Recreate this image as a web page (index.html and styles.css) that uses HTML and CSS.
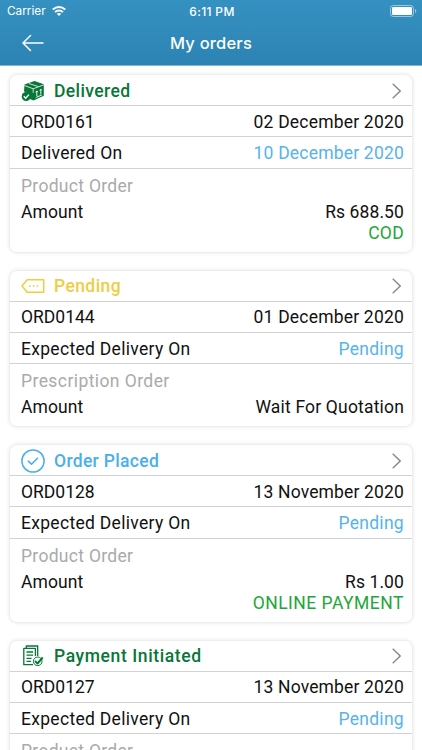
FILE: index.html
```
<!DOCTYPE html>
<html lang="en">
<head>
<meta charset="utf-8">
<meta name="viewport" content="width=device-width, initial-scale=1">
<title>My orders</title>
<link rel="stylesheet" href="styles.css">
</head>
<body>
<header class="top">
  <div class="status">
    <div class="carrier"><span>Carrier</span>
      <svg class="wifi" viewBox="0 0 14 10" width="14" height="10" fill="none" stroke="#fff" stroke-width="1.9"><path d="M.7 3.6Q7-1.6 13.3 3.6M3 6.1Q7 2.8 11 6.1"/><path d="M4.8 7.7Q7 6.2 9.2 7.7L7 10Z" fill="#fff" stroke="none"/></svg>
    </div>
    <div class="time">6:11 PM</div>
    <svg class="battery" viewBox="0 0 27 12" width="27" height="12"><rect x=".5" y=".5" width="23" height="11" rx="2.8" fill="none" stroke="#fff" stroke-opacity=".5"/><rect x="2" y="2" width="20" height="8" rx="1.2" fill="#fff"/><path d="M25 4v4q1.3-.6 1.3-2T25 4" fill="#fff" fill-opacity=".5"/></svg>
  </div>
  <div class="nav">
    <svg class="back" viewBox="0 0 22 18" width="22" height="18" fill="none" stroke="#fff" stroke-width="1.5" stroke-linecap="round" stroke-linejoin="round"><path d="M21 9H1M8.500 1.500 1 9l7.500 7.500"/></svg>
    <h1>My orders</h1>
  </div>
</header>
<main class="orders">
  <article class="card">
    <div class="row head green">
      <svg class="icon" viewBox="0 0 24 24" width="24" height="24"><path fill="currentColor" d="M3.500 5.500 13.500 2 22.800 5.200V16.800L12.500 21.500 9 20Q10 14 3 12.500Z"/><path fill="none" stroke="#fff" stroke-width=".8" d="m3.500 6.500 8.700 3.300L22.800 5.800M12.200 9.800v4M8 4.500l9 3"/><path fill="none" stroke="#fff" stroke-width=".9" d="M15.800 17v-4.800m-1 1.200 1-1.400 1 .7M19.800 15.300v-4.800m-1 1.200 1-1.400 1 .7M14.800 18.500l6-2.500"/><circle cx="5.200" cy="17.500" r="4.500" fill="currentColor"/><path fill="none" stroke="#fff" stroke-width="1.400" d="m2.800 17.300 1.900 1.900 3.200-3.600"/></svg>
      <h2 class="w-delivered">Delivered</h2>
      <svg class="chev" viewBox="0 0 9 16" width="9" height="16"><path d="m.7.7 7.500 7.300-7.500 7.300"/></svg>
    </div>
    <div class="row"><span class="id">ORD0161</span><span class="date">02 December 2020</span></div>
    <div class="row deliver"><span>Delivered On</span><span class="date blue">10 December 2020</span></div>
    <div class="details">
      <p class="kind">Product Order</p>
      <div class="amount"><span class="label">Amount</span><span class="price">Rs 688.50</span></div>
      <p class="method">COD</p>
    </div>
  </article>
  <article class="card short">
    <div class="row head yellow">
      <svg class="icon" viewBox="0 0 24 24" width="24" height="24" fill="none" stroke="currentColor" stroke-width="1.500" stroke-linejoin="round"><path d="M1 12 6.200 5.700H22.700V18.300H6.200Z"/><path stroke-width="1.600" d="M8 12h1.600m2.200 0h1.600m2.200 0h1.600"/></svg>
      <h2 class="w-pending">Pending</h2>
      <svg class="chev" viewBox="0 0 9 16" width="9" height="16"><path d="m.7.7 7.500 7.300-7.500 7.300"/></svg>
    </div>
    <div class="row"><span class="id">ORD0144</span><span class="date">01 December 2020</span></div>
    <div class="row deliver"><span class="expected">Expected Delivery On</span><span class="blue pend">Pending</span></div>
    <div class="details">
      <p class="kind prescription">Prescription Order</p>
      <div class="amount"><span class="label">Amount</span><span class="quote">Wait For Quotation</span></div>
    </div>
  </article>
  <article class="card">
    <div class="row head sky">
      <svg class="icon" viewBox="0 0 24 24" width="24" height="24" fill="none" stroke="currentColor" stroke-width="1.500" stroke-linecap="round" stroke-linejoin="round"><circle cx="12" cy="12" r="11.100"/><path stroke-width="1.600" d="m7.300 12.200 3.200 3 6-6"/></svg>
      <h2 class="w-placed">Order Placed</h2>
      <svg class="chev" viewBox="0 0 9 16" width="9" height="16"><path d="m.7.7 7.500 7.300-7.500 7.300"/></svg>
    </div>
    <div class="row"><span class="id">ORD0128</span><span class="date nov">13 November 2020</span></div>
    <div class="row deliver"><span class="expected">Expected Delivery On</span><span class="blue pend">Pending</span></div>
    <div class="details">
      <p class="kind">Product Order</p>
      <div class="amount"><span class="label">Amount</span><span class="price">Rs 1.00</span></div>
      <p class="method online">ONLINE PAYMENT</p>
    </div>
  </article>
  <article class="card">
    <div class="row head green">
      <svg class="icon" viewBox="0 0 24 24" width="24" height="24" fill="none" stroke="currentColor" stroke-width="1.300" stroke-linejoin="round"><path d="M5.300 4.200V2H16.700V12M5 4.300H2.800V20.700H12M14.400 12V4.300H5"/><path d="M5.500 8h6.500M5.500 11.200h6.500M5.500 14.400h5M5.500 17.400h4.500"/><circle cx="16.700" cy="17.300" r="4.300" stroke-width="1"/><path stroke-width="1.900" d="m14 17 2.500 2.500 5.300-6"/></svg>
      <h2 class="w-initiated">Payment Initiated</h2>
      <svg class="chev" viewBox="0 0 9 16" width="9" height="16"><path d="m.7.7 7.500 7.300-7.500 7.300"/></svg>
    </div>
    <div class="row"><span class="id">ORD0127</span><span class="date nov">13 November 2020</span></div>
    <div class="row deliver"><span class="expected">Expected Delivery On</span><span class="blue pend">Pending</span></div>
    <div class="details">
      <p class="kind">Product Order</p>
    </div>
  </article>
</main>
</body>
</html>
```
FILE: styles.css
```
* { box-sizing: border-box; }
html, body { height: 100%; }
body { margin: 0; background: #fff; overflow: hidden; font-family: Roboto, "Liberation Sans", sans-serif; font-size: 17.5px; color: #111; }
h1, h2, p { margin: 0; font-weight: 500; }
svg { display: block; flex: none; }
.top { height: 66px; background: linear-gradient(#3591c1, #2c83b3); border-bottom: 1px solid #84b6d2; color: #fff; font-family: Inter, sans-serif; }
.status { height: 22px; padding: 0 5px 0 7px; display: grid; grid-template-columns: 1fr auto 1fr; align-items: center; font-size: 11.800px; }
.carrier { display: flex; align-items: center; gap: 6px; }
.time { font-weight: 500; font-size: 12px; letter-spacing: .35px; }
.battery { justify-self: end; margin-bottom: 1px; }
.nav { height: 42px; display: grid; grid-template-columns: 1fr auto 1fr; align-items: center; padding: 0 22px; }
.nav h1 { font-size: 16.500px; font-weight: 500; letter-spacing: .2px; }
.orders { padding: 9px 10px 0; display: flex; flex-direction: column; gap: 19px; }
.card { height: 176.500px; border-radius: 7px; background: #fff; box-shadow: 0 0 4px rgba(0,0,0,.17); flex: none; }
.card.short { height: 155.500px; }
.row { height: 31px; border-bottom: 1px solid #d2d2d4; padding: 1px 8px 0 11px; display: flex; align-items: center; justify-content: space-between; white-space: nowrap; letter-spacing: .3px; }
.head { padding: 1px 11px 0 11px; justify-content: flex-start; }
.row.deliver { height: 31.500px; padding-top: 2px; }
.id { letter-spacing: 0; }
.date { letter-spacing: .2px; }
.date.nov { letter-spacing: .15px; }
h2 { font-size: 17.500px; margin-left: 9px; letter-spacing: .4px; }
.w-placed { letter-spacing: .32px; }
.w-initiated { letter-spacing: .6px; }
.chev { margin-left: auto; fill: none; stroke: #858588; stroke-width: 1.300; }
.green { color: #087637; }
.yellow { color: #efcd42; }
.sky { color: #4ab0ea; }
.blue { color: #56b3ed; }
.details { padding: 7px 8px 0 11px; letter-spacing: .3px; line-height: 21px; }
.kind { color: #aaa; font-weight: 400; height: 26px; }
.prescription { letter-spacing: .42px; }
.amount { display: flex; justify-content: space-between; }
.label { letter-spacing: .1px; }
.price { letter-spacing: .1px; }
.quote { letter-spacing: .18px; }
.method { color: #22a638; font-weight: 400; text-align: right; }
.online { letter-spacing: .5px; }
```
